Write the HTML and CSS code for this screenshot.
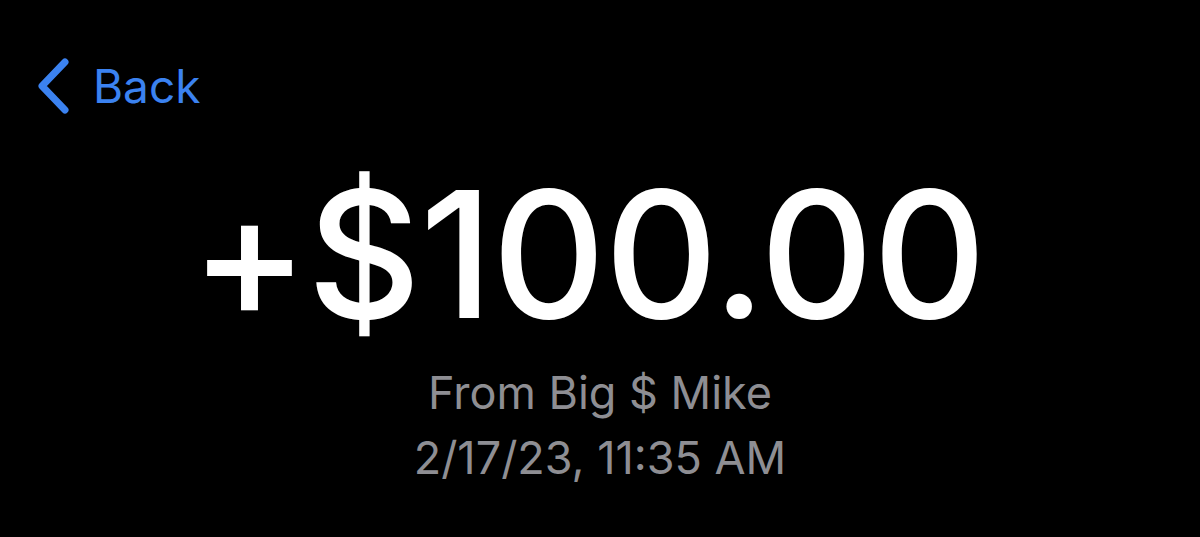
FILE: index.html
```html
<!DOCTYPE html>
<html>
<head>
<meta charset="UTF-8">
<meta name="viewport" content="width=device-width, initial-scale=1.0">
<title>Transaction</title>
<link rel="stylesheet" href="styles.css">
</head>
<body>
    <div class="screen">
        <a class="back" href="#">
            <svg class="back-icon" width="34" height="56" viewBox="0 0 34 56">
                <path d="M29 4 L6 28 L29 52" fill="none" stroke="currentColor" stroke-width="7" stroke-linecap="round" stroke-linejoin="round"/>
            </svg>
            <span>Back</span>
        </a>

        <div class="details">
            <div class="amount">+$100.00</div>
            <div class="meta first">From Big $ Mike</div>
            <div class="meta">2/17/23, 11:35 AM</div>
        </div>
    </div>
</body>
</html>
```

FILE: styles.css
```css
body {
    margin: 0;
    padding: 0;
    background-color: #000000;
    font-family: Inter, "Noto Sans", sans-serif;
}
.screen {
    width: 1200px;
    height: 537px;
    overflow: hidden;
}
.back {
    display: flex;
    align-items: center;
    gap: 23px;
    padding: 58px 0 0 36px;
    color: #3b82f0;
    text-decoration: none;
    font-size: 46px;
    line-height: 56px;
}
.back-icon {
    display: block;
}
.details {
    display: flex;
    flex-direction: column;
    align-items: center;
    margin-top: 50px;
}
.amount {
    color: #ffffff;
    font-size: 176px;
    font-weight: 500;
    line-height: 180px;
    letter-spacing: -1px;
    padding-right: 24px;
}
.meta {
    color: #8e8e93;
    font-size: 45px;
    line-height: 65px;
}
.meta.first {
    margin-top: 16px;
}
```
